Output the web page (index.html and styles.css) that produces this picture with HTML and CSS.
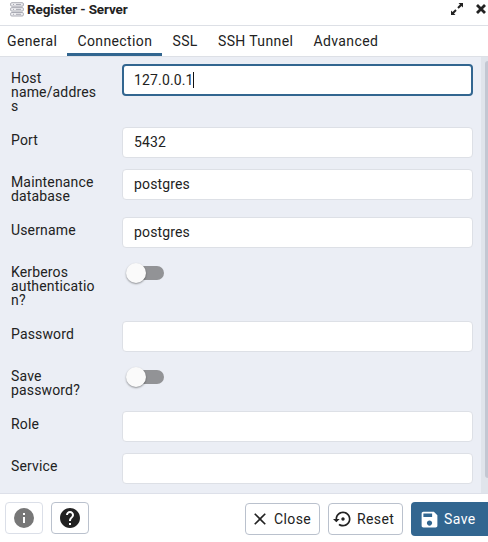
FILE: index.html
```html
<!DOCTYPE html>
<html lang="en">
<head>
<meta charset="utf-8">
<title>Register - Server</title>
<link rel="stylesheet" href="styles.css">
</head>
<body>
<div class="dialog">
  <header class="titlebar">
    <svg class="server-icon" width="14" height="15" viewBox="0 0 14 15" fill="#ededf0" stroke="#a2a3ad" stroke-width=".9">
      <rect x=".6" y=".7" width="12.800" height="3.500" rx="1.200"/>
      <rect x=".6" y="5.600" width="12.800" height="3.500" rx="1.200"/>
      <rect x=".6" y="10.500" width="12.800" height="3.500" rx="1.200"/>
      <path d="M3 2.500h1M6 2.500h5M3 7.400h1M6 7.400h5M3 12.300h1M6 12.300h5"/>
    </svg>
    <h1 class="title">Register - Server</h1>
    <svg class="expand" width="14" height="14" viewBox="0 0 14 14">
      <path d="M8.500 1H13v4.500L11.500 4 8.700 6.700 7.300 5.300 10 2.500zM5.500 13H1V8.500L2.500 10 5.300 7.300l1.400 1.400L4 11.500z" fill="#222"/>
    </svg>
    <svg class="close" width="12" height="12" viewBox="0 0 12 12">
      <path d="M2 2l8 8M10 2l-8 8" stroke="#222" stroke-width="2.800"/>
    </svg>
  </header>
  <nav class="tabs">
    <span class="tab">General</span>
    <span class="tab active">Connection</span>
    <span class="tab">SSL</span>
    <span class="tab">SSH Tunnel</span>
    <span class="tab">Advanced</span>
  </nav>
  <main class="body">
    <form class="form">
      <div class="row"><label class="label">Host name/address</label><div class="input focused">127.0.0.1<i class="caret"></i></div></div>
      <div class="row"><label class="label">Port</label><div class="input">5432</div></div>
      <div class="row"><label class="label">Maintenance database</label><div class="input">postgres</div></div>
      <div class="row"><label class="label">Username</label><div class="input">postgres</div></div>
      <div class="row"><label class="label">Kerberos authentication?</label><div class="switch"><i class="knob"></i></div></div>
      <div class="row"><label class="label">Password</label><div class="input"></div></div>
      <div class="row"><label class="label">Save password?</label><div class="switch"><i class="knob"></i></div></div>
      <div class="row"><label class="label">Role</label><div class="input"></div></div>
      <div class="row"><label class="label">Service</label><div class="input"></div></div>
    </form>
    <div class="scrollbar"><div class="thumb"></div></div>
  </main>
  <footer class="footer">
    <button class="btn icon-only disabled" type="button" aria-label="Info">
      <svg width="24" height="24" viewBox="0 0 24 24" fill="#777"><path d="M12 2a10 10 0 1 0 0 20 10 10 0 0 0 0-20zm1 15h-2v-6h2zm0-8h-2V7h2z"/></svg>
    </button>
    <button class="btn icon-only" type="button" aria-label="Help">
      <svg width="24" height="24" viewBox="0 0 24 24" fill="#222"><path d="M12 2C6.480 2 2 6.480 2 12s4.480 10 10 10 10-4.480 10-10S17.520 2 12 2zm1 17h-2v-2h2v2zm2.070-7.750l-.9.920C13.450 12.900 13 13.500 13 15h-2v-.5c0-1.100.450-2.100 1.170-2.830l1.240-1.260c.370-.360.590-.860.590-1.410 0-1.100-.9-2-2-2s-2 .9-2 2H8c0-2.210 1.790-4 4-4s4 1.790 4 4c0 .880-.360 1.680-.930 2.250z"/></svg>
    </button>
    <div class="actions">
      <button class="btn text" type="button">
        <svg width="20" height="20" viewBox="0 0 24 24" fill="#222"><path d="M19 6.410L17.590 5 12 10.590 6.410 5 5 6.410 10.590 12 5 17.590 6.410 19 12 13.410 17.590 19 19 17.590 13.410 12z"/></svg>
        <span>Close</span>
      </button>
      <button class="btn text reset" type="button">
        <svg width="20" height="20" viewBox="0 0 24 24" fill="#222"><path d="M14 12c0-1.100-.9-2-2-2s-2 .9-2 2 .9 2 2 2 2-.9 2-2zm-2-9c-4.970 0-9 4.030-9 9H0l4 4 4-4H5c0-3.870 3.130-7 7-7s7 3.130 7 7-3.130 7-7 7c-1.510 0-2.910-.490-4.060-1.300l-1.420 1.440C8.040 20.300 9.940 21 12 21c4.970 0 9-4.030 9-9s-4.030-9-9-9z"/></svg>
        <span>Reset</span>
      </button>
      <button class="btn text primary" type="button">
        <svg width="21" height="21" viewBox="0 0 24 24" fill="#fff"><path d="M17 3H5c-1.110 0-2 .9-2 2v14c0 1.100.890 2 2 2h14c1.100 0 2-.9 2-2V7l-4-4zm-5 16c-1.660 0-3-1.340-3-3s1.340-3 3-3 3 1.340 3 3-1.340 3-3 3zm3-10H5V5h10v4z"/></svg>
        <span>Save</span>
      </button>
    </div>
  </footer>
</div>
</body>
</html>
```
FILE: styles.css
```css
* { box-sizing: border-box; }
body {
  margin: 0;
  font: 14px/14px Roboto, sans-serif;
  letter-spacing: .15px;
  color: #222;
  background: #fff;
}
.dialog {
  width: 488px;
  height: 542px;
  overflow: hidden;
  display: flex;
  flex-direction: column;
}
.titlebar {
  height: 26px;
  flex: none;
  display: flex;
  align-items: center;
  padding: 0 1px 7px 10px;
  border-bottom: 1px solid #dde0e6;
}
.server-icon { margin-top: 1px; }
.title {
  margin: 0 auto 0 3px;
  font-size: 13.5px;
  font-weight: 700;
  letter-spacing: -.12px;
}
.close { margin-left: 11px; }
.tabs {
  height: 31px;
  flex: none;
  display: flex;
  letter-spacing: .38px;
  border-bottom: 1px solid #dde0e6;
}
.tab {
  padding: 8px 10.1px 0;
}
.tab:first-child { padding-left: 7px; }
.tab.active { border-bottom: 3px solid #326690; }
.body {
  height: 436px;
  flex: none;
  display: flex;
  background: #ebeef5;
}
.form {
  width: 481px;
  padding: 7px 8px 0 11px;
  display: flex;
  flex-direction: column;
  gap: 10px;
}
.row {
  display: grid;
  grid-template-columns: 87px 351px;
  column-gap: 24px;
  align-items: start;
  min-height: 32px;
}
.label {
  padding: 7px 0 3px;
  overflow-wrap: anywhere;
}
.input {
  height: 31px;
  margin: 1px 0 -6px;
  display: flex;
  align-items: center;
  padding: 0 11px 1px;
  border: 1px solid #dde0e6;
  border-radius: 4px;
  background: #fff;
}
.input.focused {
  height: 32px;
  margin-top: 0;
  border: 2px solid #326690;
  padding: 0 10px;
}
.caret {
  width: 1px;
  height: 16px;
  margin-left: -1px;
  background: #111;
}
.switch {
  width: 36px;
  height: 14px;
  margin: 8px 0 0 6px;
  border-radius: 7px;
  background: #929396;
  display: flex;
  align-items: center;
}
.knob {
  width: 20px;
  height: 20px;
  flex: none;
  margin-left: -2px;
  border-radius: 50%;
  background: #fafafa;
  box-shadow: 0 1px 2px rgba(0, 0, 0, .4);
}
.scrollbar {
  width: 7px;
  padding: 4px 0 0 4px;
  background: #e0e4eb;
}
.thumb {
  height: 417px;
  border-radius: 4px 0 0 4px;
  background: #c3c7d2;
}
.footer {
  flex: 1;
  display: flex;
  align-items: flex-start;
  gap: 8px;
  padding: 8px 0 0 5px;
  border-top: 1px solid #dde0e9;
}
.btn {
  height: 32px;
  display: flex;
  align-items: center;
  justify-content: center;
  padding: 0;
  border: 1px solid #bac1cd;
  border-radius: 4px;
  background: #fff;
  color: #222;
  font: inherit;
  letter-spacing: .4px;
}
.icon-only { width: 38px; }
.icon-only.disabled { border-color: #dbdfe8; }
.actions {
  margin-left: auto;
  display: flex;
  gap: 8px;
}
.text {
  width: 75px;
  margin-top: 1px;
  padding-left: 4px;
  justify-content: flex-start;
  gap: 4px;
}
.reset { gap: 4px; }
.primary {
  width: 77px;
  height: 34px;
  margin-top: 0;
  padding-left: 8px;
  border: 0;
  border-radius: 4px 0 0 4px;
  background: #326690;
  color: #fff;
}
```
